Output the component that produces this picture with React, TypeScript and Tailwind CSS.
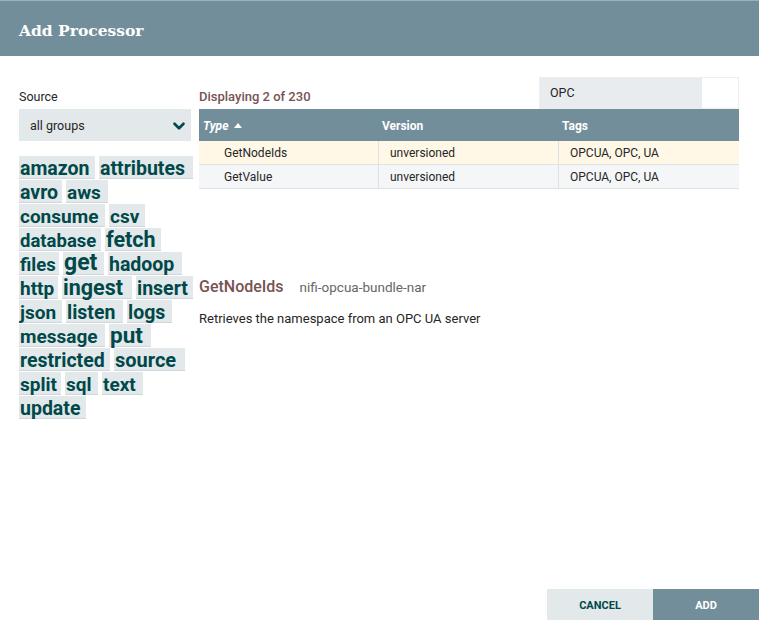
import React from "react";
import { ChevronDown } from "lucide-react";

type Tag = { t: string; size: string; w: string };

// tag cloud, one array per line
const tagRows: Tag[][] = [
  [
    { t: "amazon", size: "text-[19.5px]", w: "w-[76px]" },
    { t: "attributes", size: "text-[19.5px]", w: "w-[94px]" },
  ],
  [
    { t: "avro", size: "text-[19.5px]", w: "w-[43px]" },
    { t: "aws", size: "text-[19px]", w: "w-[42px]" },
  ],
  [
    { t: "consume", size: "text-[19px]", w: "w-[86px]" },
    { t: "csv", size: "text-[19px]", w: "w-[36px]" },
  ],
  [
    { t: "database", size: "text-[18.5px]", w: "w-[82px]" },
    { t: "fetch", size: "text-[21.5px]", w: "w-[56px]" },
  ],
  [
    { t: "files", size: "text-[18.5px]", w: "w-[40px]" },
    { t: "get", size: "text-[23px]", w: "w-[41px]" },
    { t: "hadoop", size: "text-[19.5px]", w: "w-[74px]" },
  ],
  [
    { t: "http", size: "text-[19px]", w: "w-[39px]" },
    { t: "ingest", size: "text-[21.5px]", w: "w-[70px]" },
    { t: "insert", size: "text-[19.5px]", w: "w-[57px]" },
  ],
  [
    { t: "json", size: "text-[19px]", w: "w-[43px]" },
    { t: "listen", size: "text-[19.5px]", w: "w-[57px]" },
    { t: "logs", size: "text-[19.5px]", w: "w-[45px]" },
  ],
  [
    { t: "message", size: "text-[19px]", w: "w-[86px]" },
    { t: "put", size: "text-[22.5px]", w: "w-[42px]" },
  ],
  [
    { t: "restricted", size: "text-[19.5px]", w: "w-[91px]" },
    { t: "source", size: "text-[20px]", w: "w-[71px]" },
  ],
  [
    { t: "split", size: "text-[19px]", w: "w-[42px]" },
    { t: "sql", size: "text-[19px]", w: "w-[33px]" },
    { t: "text", size: "text-[19px]", w: "w-[41px]" },
  ],
  [{ t: "update", size: "text-[19.5px]", w: "w-[67px]" }],
];

const rows = [
  { type: "GetNodeIds", version: "unversioned", tags: "OPCUA, OPC, UA", selected: true },
  { type: "GetValue", version: "unversioned", tags: "OPCUA, OPC, UA", selected: false },
];

export default function App() {
  return (
    <div className="h-[620px] w-[759px] flex flex-col bg-white font-['Roboto',sans-serif] text-[#262626] overflow-hidden">
      {/* Header */}
      <header className="h-[56px] shrink-0 bg-[#728e9b] border-t border-[#9fb0b8] flex items-center pl-[19px] pt-[4px]">
        <h1 className="text-white text-[15.5px] font-bold font-['DejaVu_Serif',serif]">Add Processor</h1>
      </header>

      {/* Body */}
      <div className="flex-1 flex pl-[19px] pr-[20px] pt-[21px] gap-[8px]">
        {/* Left column */}
        <div className="w-[172px] shrink-0">
          <div className="h-[32px] flex items-end pb-[2px] text-[12.5px]">Source</div>
          <div className="h-[32px] bg-[#e3e8eb] flex items-center justify-between pl-[11px] pr-[3px] pt-[2px] text-[12.5px]">
            <span>all groups</span>
            <ChevronDown size={18} strokeWidth={3.5} className="text-[#004849]" />
          </div>
          <div className="mt-[15px] flex flex-col gap-[2px]">
            {tagRows.map((row, i) => (
              <div key={i} className="flex gap-[4px] whitespace-nowrap">
                {row.map((g) => (
                  <span
                    key={g.t}
                    className={`${g.size} ${g.w} shrink-0 font-bold leading-none text-[#004849] bg-[#e3e8eb] h-[22px] flex items-end pl-[1px] shadow-[0_1px_0_#cfd7db]`}
                  >
                    {g.t}
                  </span>
                ))}
              </div>
            ))}
          </div>
        </div>

        {/* Right column */}
        <div className="flex-1 flex flex-col">
          <div className="h-[32px] flex items-end justify-between">
            <div className="pb-[3px] text-[13px] font-medium text-[#775351]">Displaying 2 of 230</div>
            <div className="w-[200px] h-[32px] flex border border-[#eeeeee]">
              <div className="w-[162px] bg-[#e9ecef] flex items-center pl-[10px] text-[12.5px]">OPC</div>
              <div className="flex-1 bg-white" />
            </div>
          </div>

          {/* Table */}
          <div className="w-[540px]">
            <div className="h-[32px] bg-[#728e9b] flex text-white text-[12px] font-bold pt-[1px]">
              <div className="w-[179px] flex items-center pl-[4px] gap-[6px]">
                <span className="italic">Type</span>
                <span className="w-0 h-0 border-l-[4px] border-r-[4px] border-b-[5px] border-l-transparent border-r-transparent border-b-white" />
              </div>
              <div className="w-[180px] flex items-center pl-[4px]">Version</div>
              <div className="flex-1 flex items-center pl-[4px]">Tags</div>
            </div>
            {rows.map((r) => (
              <div
                key={r.type}
                className={`h-[24px] flex text-[12px] border-b border-[#dde2e5] ${r.selected ? "bg-[#fff8e6]" : "bg-[#f4f6f7]"}`}
              >
                <div className="w-[179px] flex items-center pl-[25px]">{r.type}</div>
                <div className="w-[180px] flex items-center pl-[11px] border-l border-[#dde2e5]">{r.version}</div>
                <div className="flex-1 flex items-center pl-[11px] border-l border-[#dde2e5]">{r.tags}</div>
              </div>
            ))}
          </div>

          {/* Detail */}
          <div className="mt-[86px] flex items-baseline gap-[16px]">
            <span className="text-[16px] font-medium text-[#775351]">GetNodeIds</span>
            <span className="text-[13.5px] text-[#666666]">nifi-opcua-bundle-nar</span>
          </div>
          <div className="mt-[10px] text-[13px]">Retrieves the namespace from an OPC UA server</div>
        </div>
      </div>

      {/* Footer */}
      <div className="h-[31px] shrink-0 flex justify-end">
        <button className="w-[106px] h-full bg-[#e3e8eb] text-[#004849] text-[11px] font-bold uppercase pt-[3px]">Cancel</button>
        <button className="w-[106px] h-full bg-[#728e9b] text-white text-[11px] font-bold uppercase pt-[3px]">Add</button>
      </div>
    </div>
  );
}
